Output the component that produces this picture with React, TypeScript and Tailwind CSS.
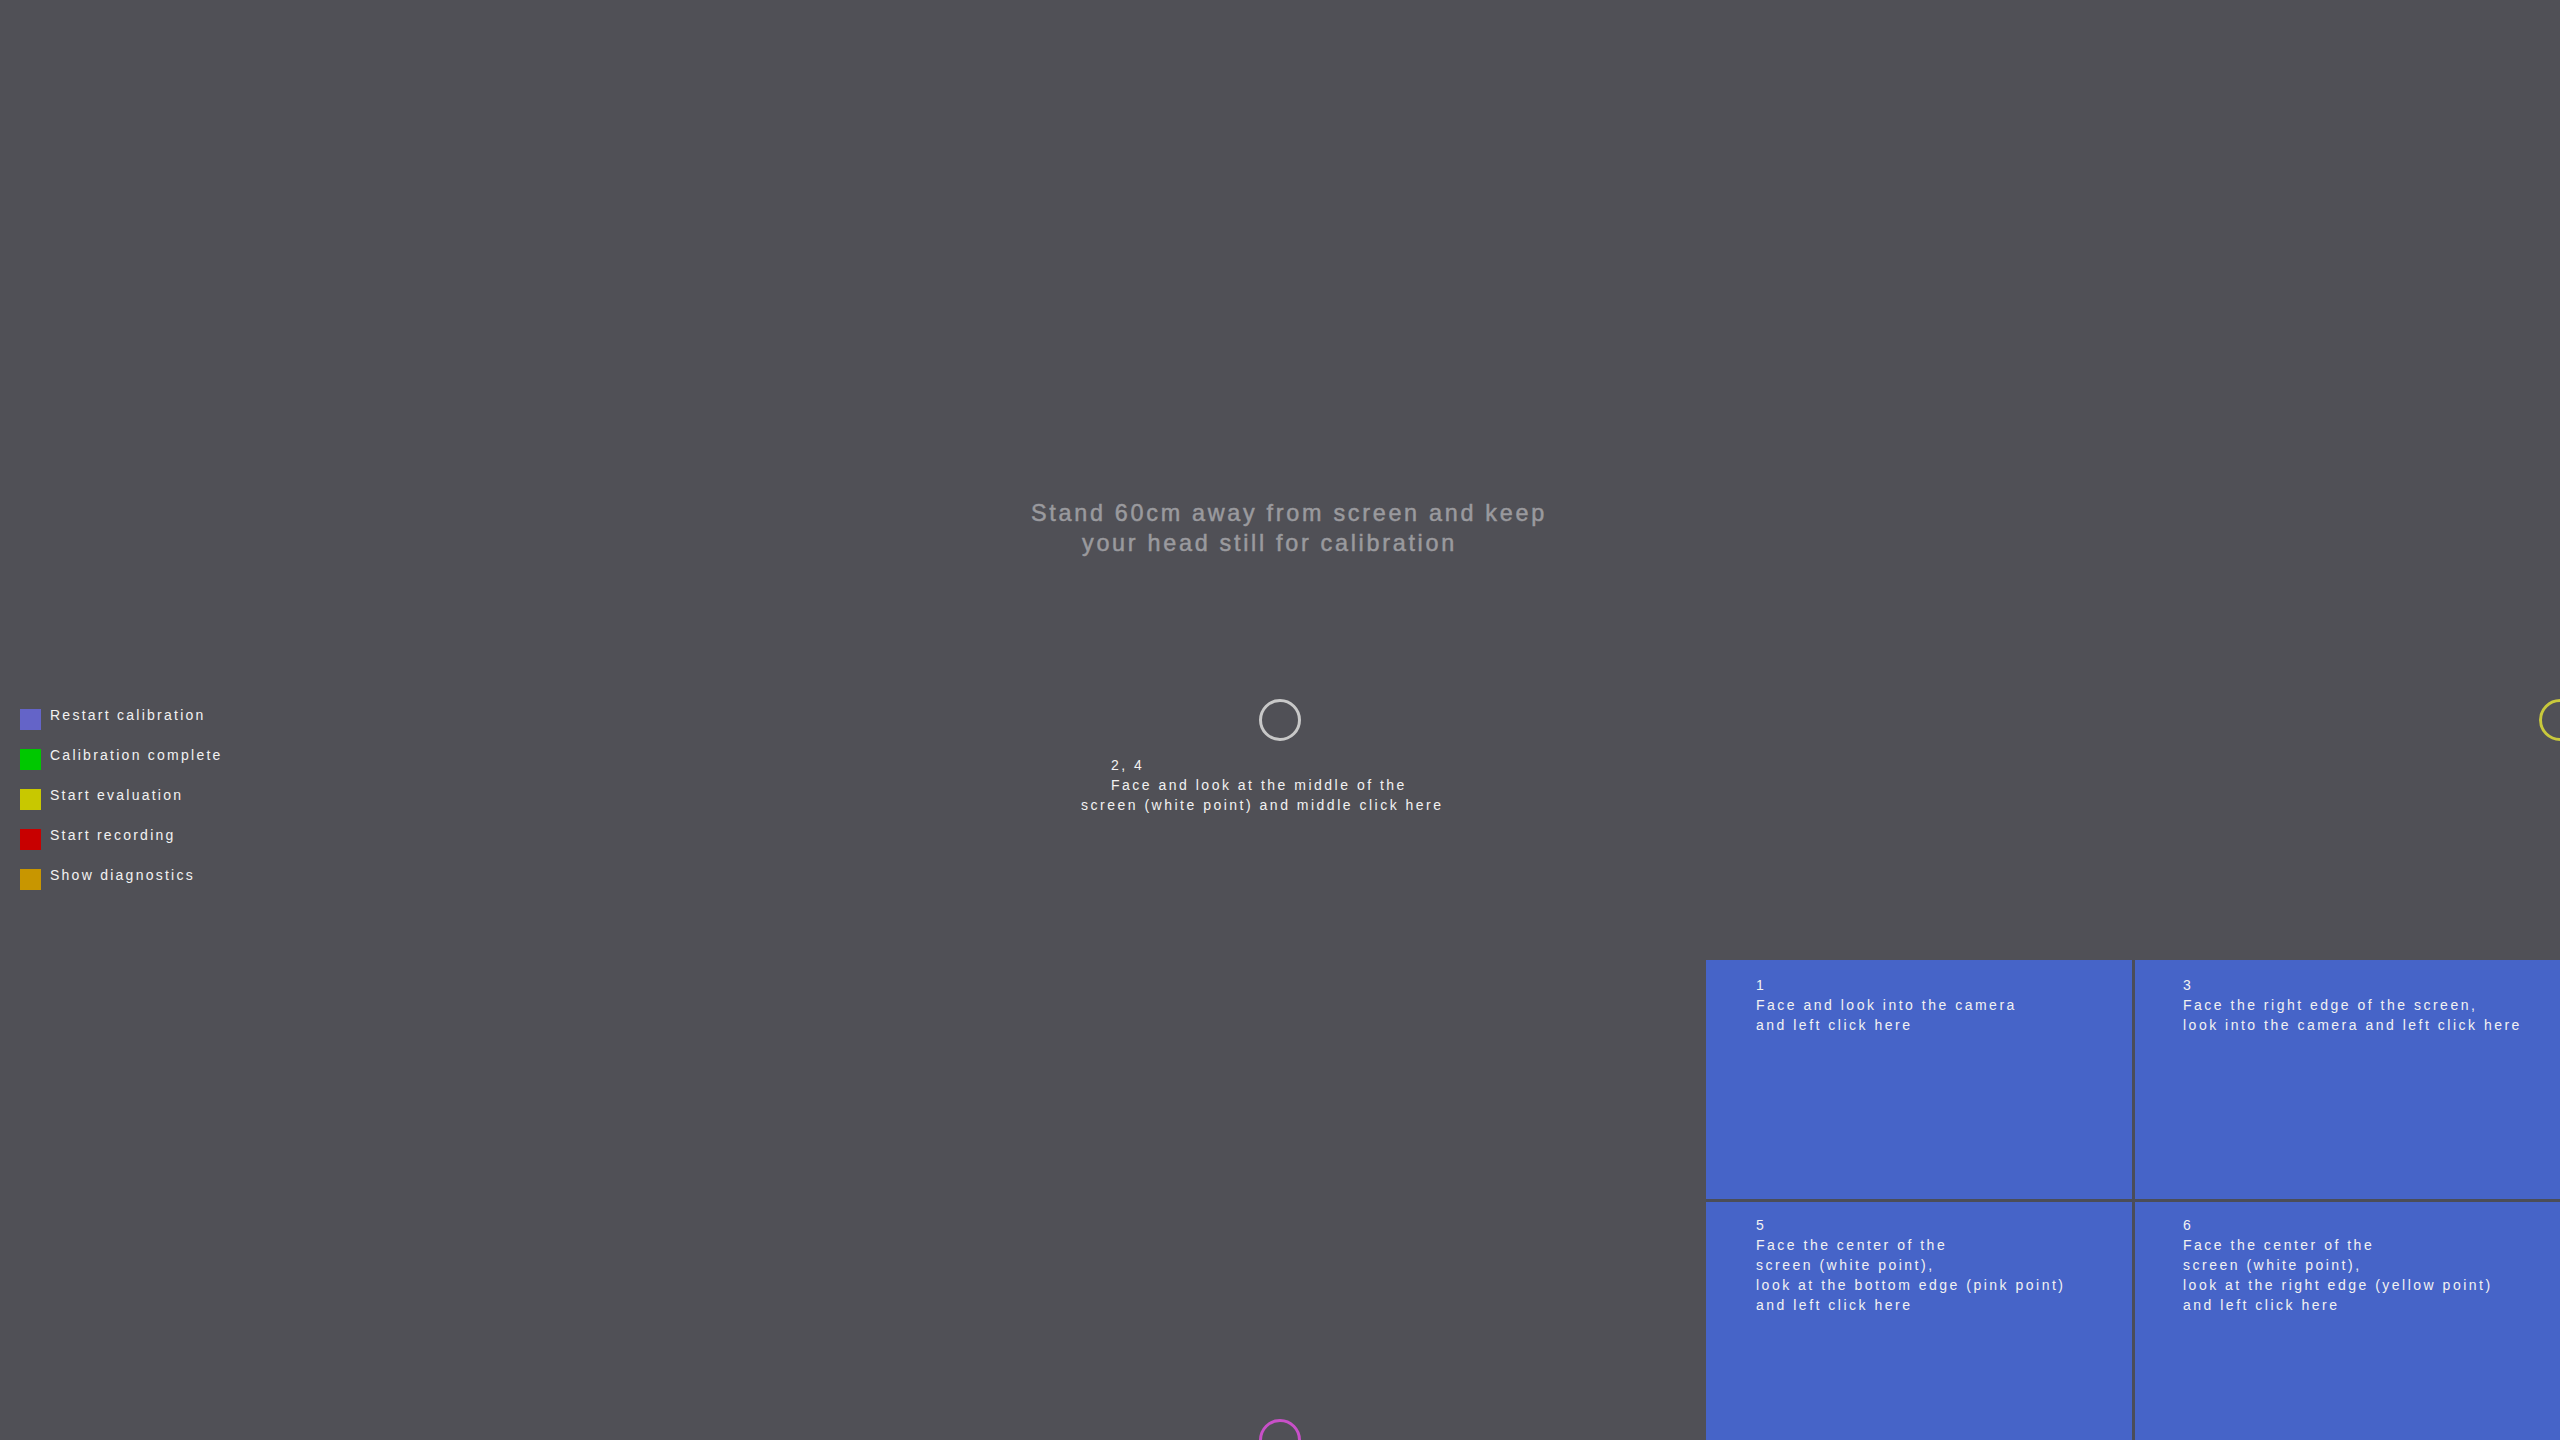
import React from "react";

const legend = [
  { label: "Restart calibration", color: "bg-[#6464c8]" },
  { label: "Calibration complete", color: "bg-[#00c800]" },
  { label: "Start evaluation", color: "bg-[#c8c800]" },
  { label: "Start recording", color: "bg-[#c80000]" },
  { label: "Show diagnostics", color: "bg-[#c89600]" },
];

const panels: string[][] = [
  ["1", "Face and look into the camera", "and left click here"],
  ["3", "Face the right edge of the screen,", "look into the camera and left click here"],
  ["5", "Face the center of the", "screen (white point),", "look at the bottom edge (pink point)", "and left click here"],
  ["6", "Face the center of the", "screen (white point),", "look at the right edge (yellow point)", "and left click here"],
];

export default function App() {
  return (
    <div className="relative flex h-[1440px] w-[2560px] flex-col overflow-hidden bg-[#505056] font-['Liberation_Sans',Arial,sans-serif]">
      <div className="ml-[1031px] mt-[498px] flex flex-col whitespace-pre text-[23.4px] leading-[30px] tracking-[2.7px] text-[#9a9a9e] [-webkit-text-stroke:0.5px_#9a9a9e]">
        <div>Stand 60cm away from screen and keep</div>
        <div className="pl-[51px]">your head still for calibration</div>
      </div>

      <div className="ml-[20px] mt-[147px] flex flex-col">
        {legend.map((l) => (
          <div key={l.label} className="flex h-[40px] items-start gap-[9px]">
            <div className={`mt-[4px] size-[21px] ${l.color}`} />
            <div className="text-[14px] leading-[20px] tracking-[2.25px] text-[#f2f2f2]">{l.label}</div>
          </div>
        ))}
      </div>

      <div className="mt-auto grid h-[480px] w-[854px] grid-cols-[426px_425px] grid-rows-[239px_238px] gap-[3px] self-end bg-[#4b4d58]">
        {panels.map((lines, i) => (
          <div
            key={i}
            className={`bg-[#4664c8] ${i < 2 ? "pt-[15px]" : "pt-[13px]"} ${i % 2 === 0 ? "pl-[50px]" : "pl-[48px]"} whitespace-pre text-[14px] leading-[20px] tracking-[2.5px] text-[#f2f2f2]`}
          >
            {lines.map((t, j) => (
              <div key={j}>{t}</div>
            ))}
          </div>
        ))}
      </div>

      {/* calibration points */}
      <div className="absolute left-[1259px] top-[699px] size-[42px] rounded-full border-[3px] border-[#c8c8c8]" />
      <div className="absolute left-[2539px] top-[699px] size-[42px] rounded-full border-[3px] border-[#c8c83c]" />
      <div className="absolute left-[1259px] top-[1419px] size-[42px] rounded-full border-[3px] border-[#c850c8]" />

      <div className="absolute left-[1081px] top-[755px] whitespace-pre text-[14px] leading-[20px] tracking-[2.5px] text-[#f2f2f2]">
        <div className="pl-[30px]">2, 4</div>
        <div className="pl-[30px]">Face and look at the middle of the</div>
        <div>screen (white point) and middle click here</div>
      </div>
    </div>
  );
}
